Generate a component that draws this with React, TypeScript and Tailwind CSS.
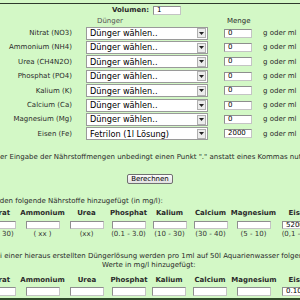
const naehrstoffe = [
  { label: "Nitrat (NO3)", duenger: "Dünger wählen..", menge: "0" },
  { label: "Ammonium (NH4)", duenger: "Dünger wählen..", menge: "0" },
  { label: "Urea (CH4N2O)", duenger: "Dünger wählen..", menge: "0" },
  { label: "Phosphat (PO4)", duenger: "Dünger wählen..", menge: "0" },
  { label: "Kalium (K)", duenger: "Dünger wählen..", menge: "0" },
  { label: "Calcium (Ca)", duenger: "Dünger wählen..", menge: "0" },
  { label: "Magnesium (Mg)", duenger: "Dünger wählen..", menge: "0" },
  { label: "Eisen (Fe)", duenger: "Fetrilon (1l Lösung)", menge: "2000" },
];

const spalten = ["Nitrat", "Ammonium", "Urea", "Phosphat", "Kalium", "Calcium", "Magnesium", "Eisen"];
const bereiche = ["(10 - 30)", "( xx )", "(xx)", "(0.1 - 3.0)", "(10 - 30)", "(30 - 40)", "(5 - 10)", "(0,1 - 0,5)"];
const breite1 = ["w-[43px]", "w-[45px]", "w-[43px]", "w-[41px]", "w-[41px]", "w-[41px]", "w-[45px]", "w-[46px]"];
const breite2 = ["w-[43px]", "w-[45px]", "w-[44px]", "w-[40px]", "w-[40px]", "w-[42px]", "w-[46px]", "w-[44px]"];
const werte1 = ["", "", "", "", "", "", "", "5200"];
const werte2 = ["", "", "", "", "", "", "", "0.10"];

function Feld({ value, className = "" }: { value: string; className?: string }) {
  return (
    <div
      className={`bg-white border border-[#c4c4c4] border-t-[#8e8e8e] border-l-[#8e8e8e] pl-[3px] flex items-center text-[7px] leading-none text-black ${className}`}
    >
      {value}
    </div>
  );
}

function Auswahl({ text }: { text: string }) {
  return (
    <div className="w-[122px] h-[13px] bg-white border border-[#9a9a9a] flex items-center justify-between pl-[3px] pr-[1px]">
      <span className="text-[8.2px] leading-none text-black">{text}</span>
      <span className="w-[9px] h-[10px] bg-[#ececec] border border-[#b0b0b0] flex items-center justify-center">
        <svg width="5" height="3" viewBox="0 0 5 3">
          <path d="M0 0 H5 L2.5 3 Z" fill="#222" />
        </svg>
      </span>
    </div>
  );
}

function Tabelle({ breiten, werte, mitBereich }: { breiten: string[]; werte: string[]; mitBereich: boolean }) {
  return (
    <div className="flex ml-[-23px]">
      {spalten.map((s, i) => (
        <div key={s} className={`${breiten[i]} shrink-0 flex flex-col items-center`}>
          <div className="h-[10px] leading-[10px] font-bold whitespace-nowrap">{s}</div>
          <Feld value={werte[i]} className={mitBereich ? "mt-[3px] w-[34px] h-[8px]" : "mt-[2px] w-[34px] h-[9px]"} />
          {mitBereich && <div className="h-[10px] leading-[10px] whitespace-nowrap text-[#333]">{bereiche[i]}</div>}
        </div>
      ))}
    </div>
  );
}

export default function App() {
  return (
    <div className="w-[300px] h-[300px] overflow-hidden bg-[#d3f8c6] text-[7px] text-[#2a2a2a] font-['DejaVu_Sans',sans-serif]">
      <div className="h-[3px]"></div>
      <div className="border-t border-[#2e3a2c]"></div>

      {/* Volumen */}
      <div className="h-[12px] flex items-center">
        <div className="w-[150px] text-right font-bold pr-[1px]">Volumen:</div>
        <Feld value="1" className="ml-[3px] w-[28px] h-[9px]" />
      </div>

      <div className="h-[10px] flex items-center">
        <span className="ml-[97px] text-[#555]">Dünger</span>
        <span className="ml-[104px] mt-[1px]">Menge</span>
      </div>

      {naehrstoffe.map((n) => (
        <div key={n.label} className="h-[14.4px] flex items-center">
          <div className="w-[72px] text-right whitespace-nowrap">{n.label}</div>
          <div className="ml-[14px]">
            <Auswahl text={n.duenger} />
          </div>
          <Feld value={n.menge} className="ml-[16px] w-[28px] h-[9px]" />
          <span className="ml-[11px] whitespace-nowrap">g oder ml</span>
        </div>
      ))}

      <div className="pt-[11px] leading-[10px] whitespace-nowrap ml-[-4.4px]">
        der Eingabe der Nährstoffmengen unbedingt einen Punkt "." anstatt eines Kommas nutzen!
      </div>

      <div className="mt-[12px] flex justify-center">
        <button className="w-[46px] h-[10px] border border-[#707070] rounded-[2px] bg-gradient-to-b from-[#fbfbfb] to-[#e2e2e2] text-[7px] leading-none text-black flex items-center justify-center">
          Berechnen
        </button>
      </div>

      <div className="mt-[12px] leading-[10px] whitespace-nowrap ml-[-13px]">
        werden folgende Nährstoffe hinzugefügt (in mg/l):
      </div>

      <div className="mt-[2px]">
        <Tabelle breiten={breite1} werte={werte1} mitBereich />
      </div>

      <div className="mt-[13px] leading-[9px] whitespace-nowrap ml-[-9px]">
        Bei einer hieraus erstellten Düngerlösung werden pro 1ml auf 50l Aquarienwasser folgende
      </div>
      <div className="leading-[9px] whitespace-nowrap ml-[102px]">Werte in mg/l hinzugefügt:</div>

      <div className="mt-[5px]">
        <Tabelle breiten={breite2} werte={werte2} mitBereich={false} />
      </div>

      <div className="mt-[2px] h-[2px] bg-[#2f4a2a]"></div>
    </div>
  );
}
